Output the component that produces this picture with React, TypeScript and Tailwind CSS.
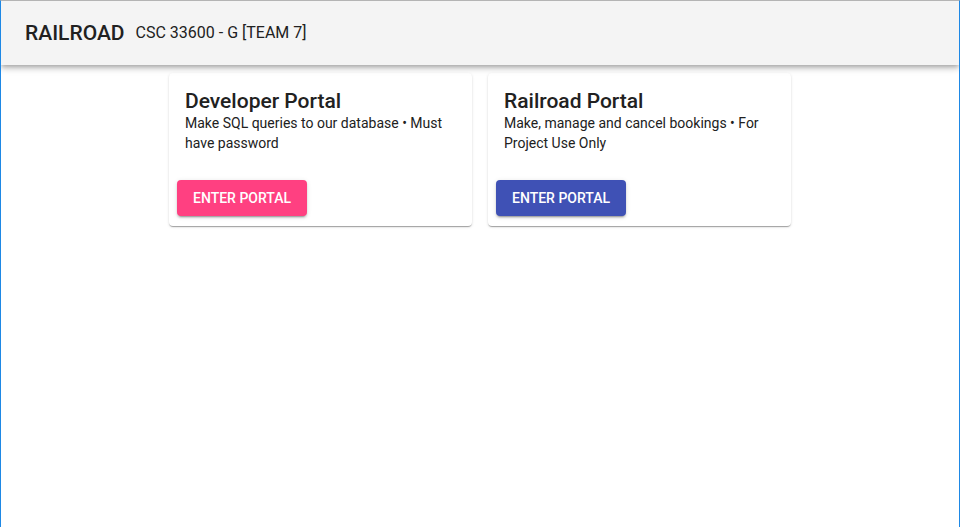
import React from 'react';

export default function App() {
  return (
    <div className="h-[527px] w-[960px] overflow-hidden border-x border-t border-x-[#1e88e5] border-t-[#b4b4b4] bg-white font-['Roboto',sans-serif] text-[#212121]">
      <Header />
      <main className="flex justify-center gap-4 pt-2">
        <PortalCard
          title="Developer Portal"
          text="Make SQL queries to our database • Must have password"
          color="pink"
        />
        <PortalCard
          title="Railroad Portal"
          text="Make, manage and cancel bookings • For Project Use Only"
          color="indigo"
        />
      </main>
    </div>
  );
}

function Header() {
  return (
    <header className="relative z-10 flex h-16 items-center gap-[11px] bg-[#f4f4f4] px-6 shadow-[0_2px_4px_-1px_rgba(0,0,0,0.2),0_4px_5px_0_rgba(0,0,0,0.14),0_1px_10px_0_rgba(0,0,0,0.12)]">
      <h1 className="text-[21px] font-medium leading-8">RAILROAD</h1>
      <span className="text-base leading-6">CSC 33600 - G [TEAM 7]</span>
    </header>
  );
}

function PortalCard({ title, text, color }: { title: string; text: string; color: 'pink' | 'indigo' }) {
  return (
    <div className="w-[303px] rounded bg-white shadow-[0_2px_1px_-1px_rgba(0,0,0,0.2),0_1px_1px_0_rgba(0,0,0,0.14),0_1px_3px_0_rgba(0,0,0,0.12)]">
      <div className="px-4 pt-4 pb-[19px]">
        <h2 className="text-[21px] font-medium leading-6">{title}</h2>
        <p className="text-sm leading-5">{text}</p>
      </div>
      <div className="px-2 pt-2 pb-[10px]">
        <button
          className={
            'h-9 rounded px-4 text-sm font-medium text-white uppercase shadow-[0_3px_1px_-2px_rgba(0,0,0,0.2),0_2px_2px_0_rgba(0,0,0,0.14),0_1px_5px_0_rgba(0,0,0,0.12)] ' +
            (color === 'pink' ? 'bg-[#ff4081]' : 'bg-[#3f51b5]')
          }
        >
          Enter Portal
        </button>
      </div>
    </div>
  );
}
